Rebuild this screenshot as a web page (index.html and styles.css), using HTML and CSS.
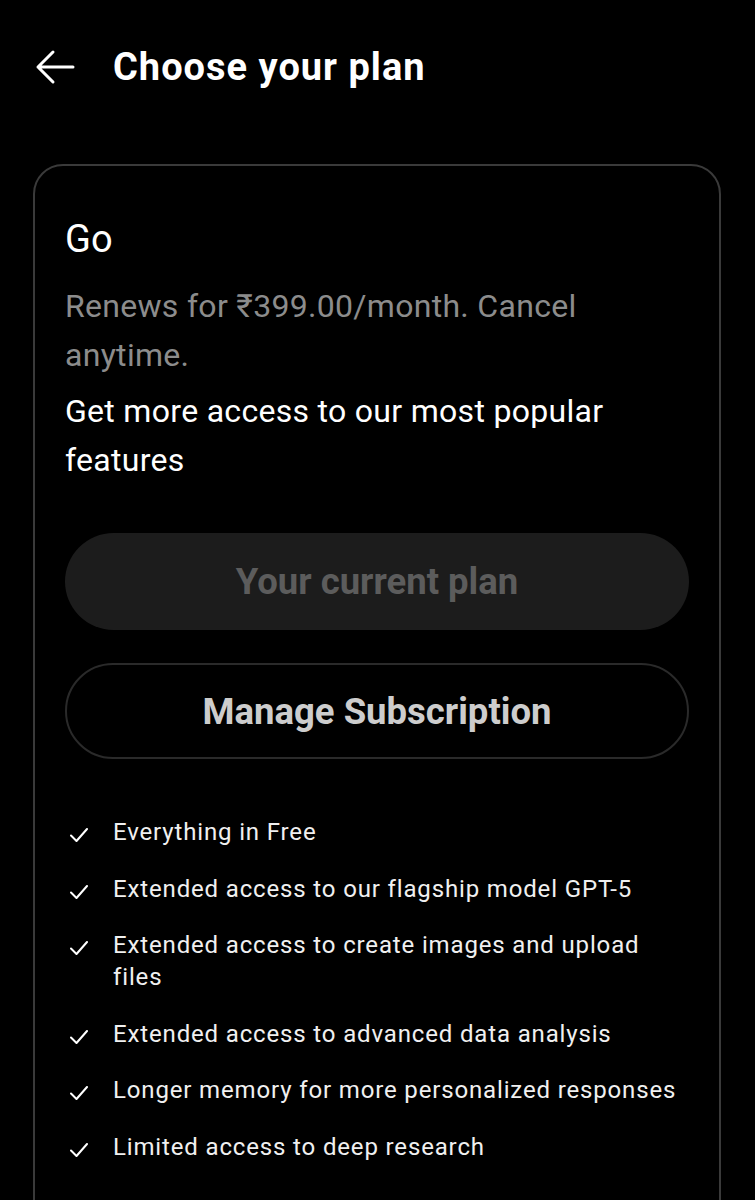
FILE: index.html
```html
<!DOCTYPE html>
<html lang="en">
<head>
<meta charset="utf-8">
<title>Choose your plan</title>
<link rel="stylesheet" href="styles.css">
</head>
<body>
<header class="header">
  <button class="back" aria-label="Back">
    <svg viewBox="0 0 40 40" width="40" height="40"><path d="M3 20 H38 M18 5 L3 20 L18 35" fill="none" stroke="#fff" stroke-width="3" stroke-linecap="round" stroke-linejoin="round"/></svg>
  </button>
  <h1 class="title">Choose your plan</h1>
</header>
<main class="card">
  <h2 class="plan-name">Go</h2>
  <p class="renews">Renews for ₹399.00/month. Cancel anytime.</p>
  <p class="tagline">Get more access to our most popular features</p>
  <div class="btn btn-current">Your current plan</div>
  <div class="btn btn-manage">Manage Subscription</div>
  <ul class="features">
    <li><svg class="check" viewBox="0 0 18 14" width="18" height="14"><path d="M1 7.5 L6.5 13 L17 1" fill="none" stroke="#fff" stroke-width="2" stroke-linecap="round" stroke-linejoin="round"/></svg><span>Everything in Free</span></li>
    <li><svg class="check" viewBox="0 0 18 14" width="18" height="14"><path d="M1 7.5 L6.5 13 L17 1" fill="none" stroke="#fff" stroke-width="2" stroke-linecap="round" stroke-linejoin="round"/></svg><span>Extended access to our flagship model GPT-5</span></li>
    <li><svg class="check" viewBox="0 0 18 14" width="18" height="14"><path d="M1 7.5 L6.5 13 L17 1" fill="none" stroke="#fff" stroke-width="2" stroke-linecap="round" stroke-linejoin="round"/></svg><span>Extended access to create images and upload files</span></li>
    <li><svg class="check" viewBox="0 0 18 14" width="18" height="14"><path d="M1 7.5 L6.5 13 L17 1" fill="none" stroke="#fff" stroke-width="2" stroke-linecap="round" stroke-linejoin="round"/></svg><span>Extended access to advanced data analysis</span></li>
    <li><svg class="check" viewBox="0 0 18 14" width="18" height="14"><path d="M1 7.5 L6.5 13 L17 1" fill="none" stroke="#fff" stroke-width="2" stroke-linecap="round" stroke-linejoin="round"/></svg><span>Longer memory for more personalized responses</span></li>
    <li><svg class="check" viewBox="0 0 18 14" width="18" height="14"><path d="M1 7.5 L6.5 13 L17 1" fill="none" stroke="#fff" stroke-width="2" stroke-linecap="round" stroke-linejoin="round"/></svg><span>Limited access to deep research</span></li>
  </ul>
</main>
</body>
</html>
```
FILE: styles.css
```css
* { box-sizing: border-box; }
html, body {
  margin: 0;
  padding: 0;
  background: #000;
  color: #fff;
  font-family: Roboto, "Noto Sans", sans-serif;
}
body { width: 755px; overflow: hidden; }

.header {
  height: 134px;
  display: flex;
  align-items: center;
  padding-left: 35px;
}
.back {
  background: none;
  border: 0;
  padding: 0;
  width: 40px;
  height: 40px;
  display: flex;
  margin-right: 38px;
}
.title {
  margin: 0;
  font-size: 38px;
  font-weight: 700;
  line-height: 45px;
  letter-spacing: 1px;
  color: #fff;
}

.card {
  margin: 30px 34px 0 33px;
  border: 2px solid #3a3a3a;
  border-radius: 30px;
  padding: 50px 30px 80px 30px;
}
.plan-name {
  margin: 0;
  font-size: 38px;
  font-weight: 400;
  line-height: 46px;
}
.renews {
  margin: 20px 0 0;
  font-size: 32px;
  line-height: 49px;
  letter-spacing: 0.3px;
  color: #8c8c8c;
}
.tagline {
  margin: 7px 0 0;
  font-size: 32px;
  line-height: 49px;
  letter-spacing: 0.3px;
  color: #fff;
}
.btn {
  border-radius: 999px;
  display: flex;
  align-items: center;
  justify-content: center;
  font-size: 36.5px;
  font-weight: 700;
}
.btn-current {
  margin-top: 48px;
  height: 97px;
  background: #1c1c1c;
  color: #5c5c5c;
}
.btn-manage {
  margin-top: 33px;
  height: 96px;
  border: 2px solid #2a2a2a;
  color: #cdcdcd;
}
.features {
  list-style: none;
  margin: 57px 0 0;
  padding: 0;
  display: flex;
  flex-direction: column;
  gap: 24.5px;
}
.features li {
  display: flex;
  align-items: flex-start;
  font-size: 24px;
  line-height: 32px;
  letter-spacing: 0.85px;
  color: #f0f0f0;
}
.check {
  flex: none;
  margin: 12px 25px 0 5px;
}
```
